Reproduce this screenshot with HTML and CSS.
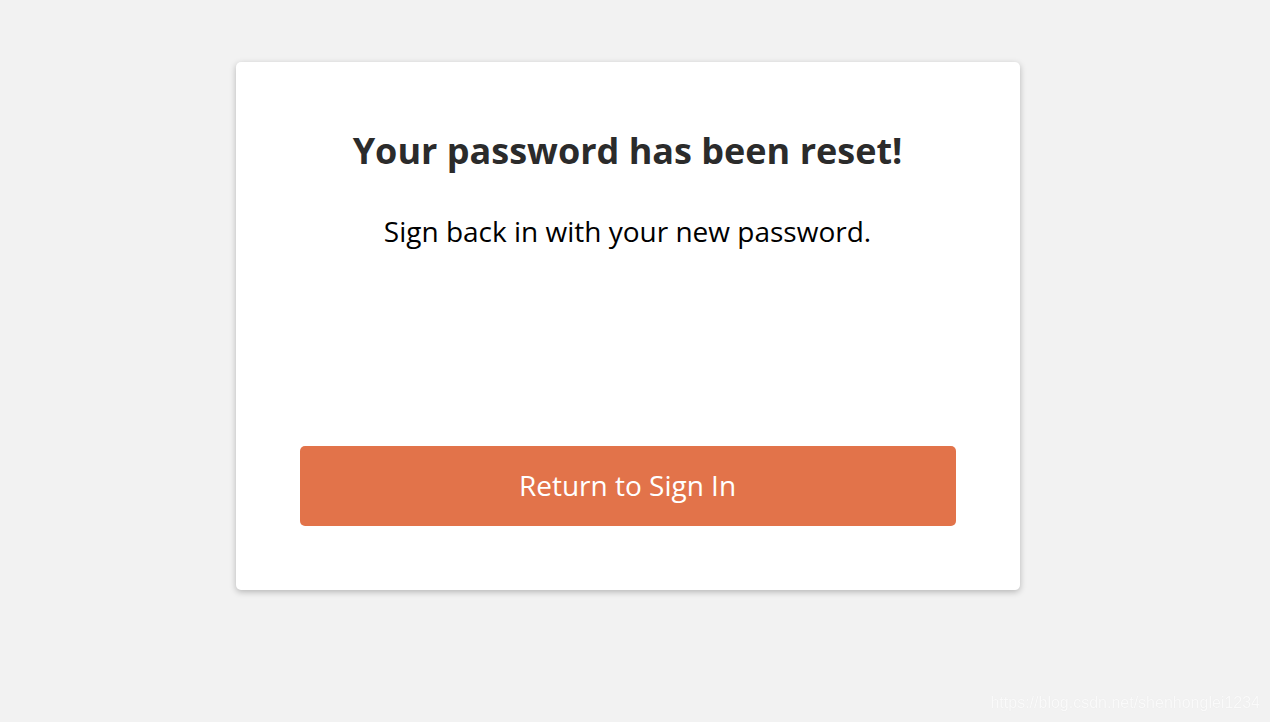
FILE: index.html
```html
<!DOCTYPE html>
<html lang="en">
<head>
<meta charset="utf-8">
<title>Password reset</title>
<link rel="stylesheet" href="styles.css">
</head>
<body>
<div class="page">
  <main class="card">
    <h1 class="title">Your password has been reset!</h1>
    <p class="subtitle">Sign back in with your new password.</p>
    <a class="button" href="#">Return to Sign In</a>
  </main>
</div>
<div class="watermark">https://blog.csdn.net/shenhonglei1234</div>
</body>
</html>
```
FILE: styles.css
```css
html, body {
  margin: 0;
  padding: 0;
  background: #f2f2f2;
  height: 100%;
}
body {
  font-family: "Open Sans", "Noto Sans", sans-serif;
  overflow: hidden;
}
.page {
  display: flex;
  justify-content: center;
  padding: 62px 15px 0 0;
}
.card {
  width: 784px;
  box-sizing: border-box;
  background: #ffffff;
  border-radius: 5px;
  box-shadow: 0 2px 6px rgba(0, 0, 0, 0.25);
  padding: 65px 64px 64px;
  display: flex;
  flex-direction: column;
  align-items: stretch;
}
.title {
  margin: 0;
  font-size: 36px;
  line-height: 48px;
  font-weight: 700;
  color: #2b2b2b;
  text-align: center;
}
.subtitle {
  margin: 37px 0 0;
  font-size: 28px;
  line-height: 38px;
  color: #000;
  text-align: center;
}
.button {
  margin-top: 196px;
  height: 80px;
  box-sizing: border-box;
  padding-bottom: 3px;
  display: flex;
  align-items: center;
  justify-content: center;
  background: #e2734a;
  border-radius: 5px;
  color: #fff;
  font-size: 28px;
  text-decoration: none;
}
.watermark {
  position: fixed;
  right: 10px;
  bottom: 10px;
  font-family: "Liberation Sans", Arial, sans-serif;
  font-size: 16px;
  color: #fafafa;
  text-shadow: 0 0 1px rgba(0, 0, 0, 0.08);
}
```
